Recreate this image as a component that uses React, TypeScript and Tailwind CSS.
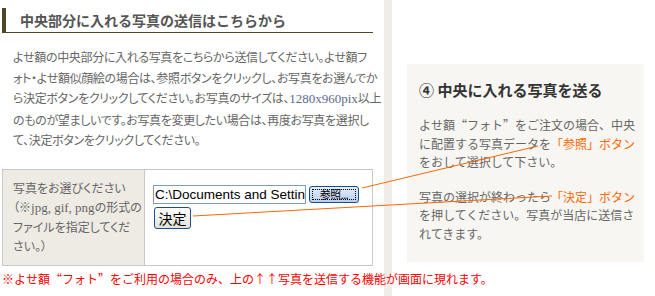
import React from 'react';

const jp = "font-['Noto_Sans_CJK_JP',sans-serif]";

// full-width quote marks, as in the original bitmap font
const Q = ({ children }: { children: React.ReactNode }) => (
	<span className="[font-feature-settings:'fwid']">{children}</span>
);

export default function App() {
	return (
		<div className={`relative w-[655px] h-[296px] bg-white overflow-hidden ${jp}`}>
			<div className="flex h-full">
				{/* left column */}
				<div className="relative z-10 w-[384px] shrink-0">
					<div className="mt-[8px] ml-[2px] w-[371px] h-[25px] border-l-[4px] border-b border-[#4d4628] pl-[14px] flex items-center">
						<h1 className="text-[14px] font-bold text-[#555] leading-none">中央部分に入れる写真の送信はこちらから</h1>
					</div>

					<p className="mt-[14px] pl-[13px] text-[12px] leading-[20.5px] text-[#666] whitespace-nowrap tracking-[-0.35px] [font-feature-settings:'palt']">
						よせ額の中央部分に入れる写真をこちらから送信してください。よせ額フ
						<br />
						ォト・よせ額似顔絵の場合は、参照ボタンをクリックし、お写真をお選んでか
						<br />
						ら決定ボタンをクリックしてください。お写真のサイズは、
						<span className="font-['Liberation_Serif',serif] text-[13px] tracking-normal text-[#5a6a8a]">1280x960pix</span>
						以上
						<br />
						のものが望ましいです。お写真を変更したい場合は、再度お写真を選択し
						<br />
						て、決定ボタンをクリックしてください。
					</p>

					<div className="mt-[18px] ml-[2px] w-[371px] h-[97px] border border-[#c8c8c8] flex">
						<div className="w-[142px] shrink-0 bg-[#eeebe4] border-r border-[#c8c8c8] pl-[10px] pt-[8px] text-[12px] leading-[19px] text-[#666] [font-feature-settings:'palt']">
							写真をお選びください
							<br />
							（※<span className="font-['Liberation_Serif',serif] text-[13px]">jpg, gif, png</span>の形式の
							<br />
							ファイルを指定してくだ
							<br />
							さい。）
						</div>
						<div className="flex-1 pl-[8px] pt-[15px]">
							<div className="flex items-center gap-[3px]">
								<div className="w-[153px] h-[19px] border border-[#7f9db9] bg-white overflow-hidden whitespace-nowrap pl-[1px] font-['Liberation_Sans',sans-serif] text-[13.5px] leading-[17px] text-black">
									C:\Documents and Settings
								</div>
								<button className="w-[50px] h-[17px] rounded-[3px] border border-[#1c4f8a] bg-gradient-to-b from-[#e4eefc] to-[#b9cdef] p-[2px]">
									<span className="flex h-full items-center justify-center border border-dotted border-black text-[11px] leading-none tracking-[-0.5px] text-black">
										参照...
									</span>
								</button>
							</div>
							<button className="mt-[3px] ml-[1px] w-[37px] h-[22px] rounded-[3px] border border-[#1c4f8a] bg-gradient-to-b from-white to-[#e2e2da] text-[14px] leading-none text-black">
								決定
							</button>
						</div>
					</div>

					<p className="mt-[5px] ml-[2px] whitespace-nowrap text-[12px] leading-[16px] text-[#ff0000]">
						※よせ額<Q>“</Q>フォト<Q>”</Q>をご利用の場合のみ、上の↑↑写真を送信する機能が画面に現れます。
					</p>
				</div>

				{/* stripe */}
				<div className="w-[8px] shrink-0 bg-[#f0ede8]" />

				{/* right column */}
				<div className="flex-1 pl-[15px] pt-[64px]">
					<div className="w-[237px] h-[198px] bg-[#f7f6f2] pl-[12px] pt-[16px]">
						<h2 className="text-[15px] font-bold text-[#333] leading-[20px]">④ 中央に入れる写真を送る</h2>
						<p className="mt-[16px] text-[12px] leading-[18.5px] text-[#666] whitespace-nowrap">
							よせ額<Q>“</Q>フォト<Q>”</Q>をご注文の場合、中央
							<br />
							に配置する写真データを<span className="text-[#ff6600]">「参照」ボタン</span>
							<br />
							をおして選択して下さい。
						</p>
						<p className="mt-[16px] text-[12px] leading-[18.5px] text-[#666] whitespace-nowrap">
							写真の選択が終わったら<span className="text-[#ff6600]">「決定」ボタン</span>
							<br />
							を押してください。写真が当店に送信さ
							<br />
							れてきます。
						</p>
					</div>
				</div>
			</div>

			{/* pointer lines */}
			<svg className="absolute left-0 top-0 z-20 pointer-events-none" width="655" height="296">
				<line x1="362" y1="188" x2="538" y2="146" stroke="#ff6600" strokeWidth="1" />
				<line x1="193" y1="216" x2="552" y2="196" stroke="#ff6600" strokeWidth="1" />
			</svg>
		</div>
	);
}
